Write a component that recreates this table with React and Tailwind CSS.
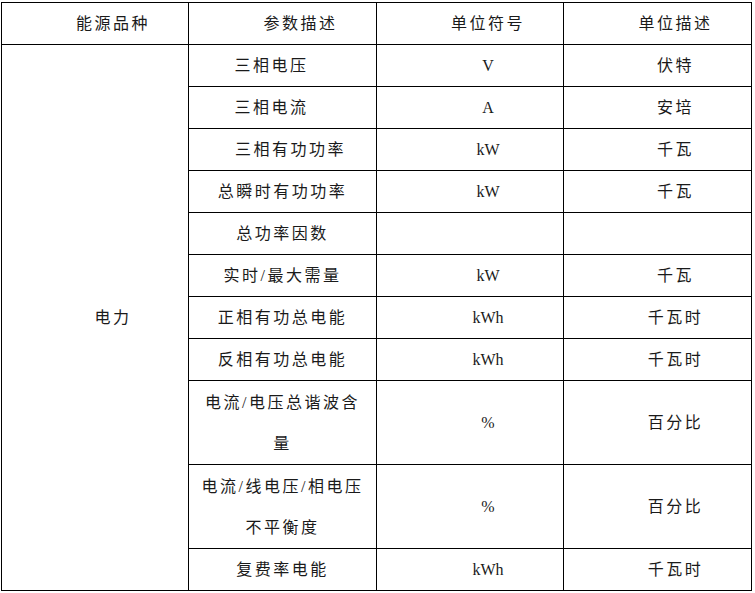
const rows = [
  { name: "三相电压", unit: "V", desc: "伏特", shift: "mr-[22px]" },
  { name: "三相电流", unit: "A", desc: "安培", shift: "mr-[22px]" },
  { name: "三相有功功率", unit: "kW", desc: "千瓦", shift: "ml-[16px]" },
  { name: "总瞬时有功功率", unit: "kW", desc: "千瓦" },
  { name: "总功率因数", unit: "", desc: "" },
  { name: "实时/最大需量", unit: "kW", desc: "千瓦" },
  { name: "正相有功总电能", unit: "kWh", desc: "千瓦时" },
  { name: "反相有功总电能", unit: "kWh", desc: "千瓦时" },
  { name: ["电流/电压总谐波含", "量"], unit: "%", desc: "百分比", tall: true },
  { name: ["电流/线电压/相电压", "不平衡度"], unit: "%", desc: "百分比", tall: true },
  { name: "复费率电能", unit: "kWh", desc: "千瓦时" },
];

const cell = "border-r border-b border-black flex items-center justify-center";

export default function App() {
  return (
    <div className="w-[755px] h-[593px] bg-white pt-[2px] pl-[1px] text-[#1a1a1a] text-[16px] tracking-[2.5px] font-['Liberation_Serif','Noto_Sans_CJK_SC',serif]">
      <div className="grid grid-cols-[187px_188px_187px_188px] grid-rows-[42px_repeat(8,42px)_84px_84px_42px] w-fit border-l border-t border-black">
        <div className={`${cell} pl-[36px]`}>能源品种</div>
        <div className={`${cell} pl-[36px]`}>参数描述</div>
        <div className={`${cell} pl-[36px]`}>单位符号</div>
        <div className={`${cell} pl-[36px]`}>单位描述</div>

        <div className={`${cell} row-span-11 col-start-1 row-start-2 pl-[36px]`}>电力</div>

        {rows.map((r, i) => (
          <div key={i} className="contents">
            <div className={`${cell} col-start-2`}>
              {Array.isArray(r.name) ? (
                <div className="flex flex-col items-center leading-[41px]">
                  <span>{r.name[0]}</span>
                  <span>{r.name[1]}</span>
                </div>
              ) : (
                <span className={r.shift || ""}>{r.name}</span>
              )}
            </div>
            <div className={`${cell} pl-[36px] text-[16px] tracking-normal`}>{r.unit}</div>
            <div className={`${cell} pl-[36px]`}>{r.desc}</div>
          </div>
        ))}
      </div>
    </div>
  );
}
